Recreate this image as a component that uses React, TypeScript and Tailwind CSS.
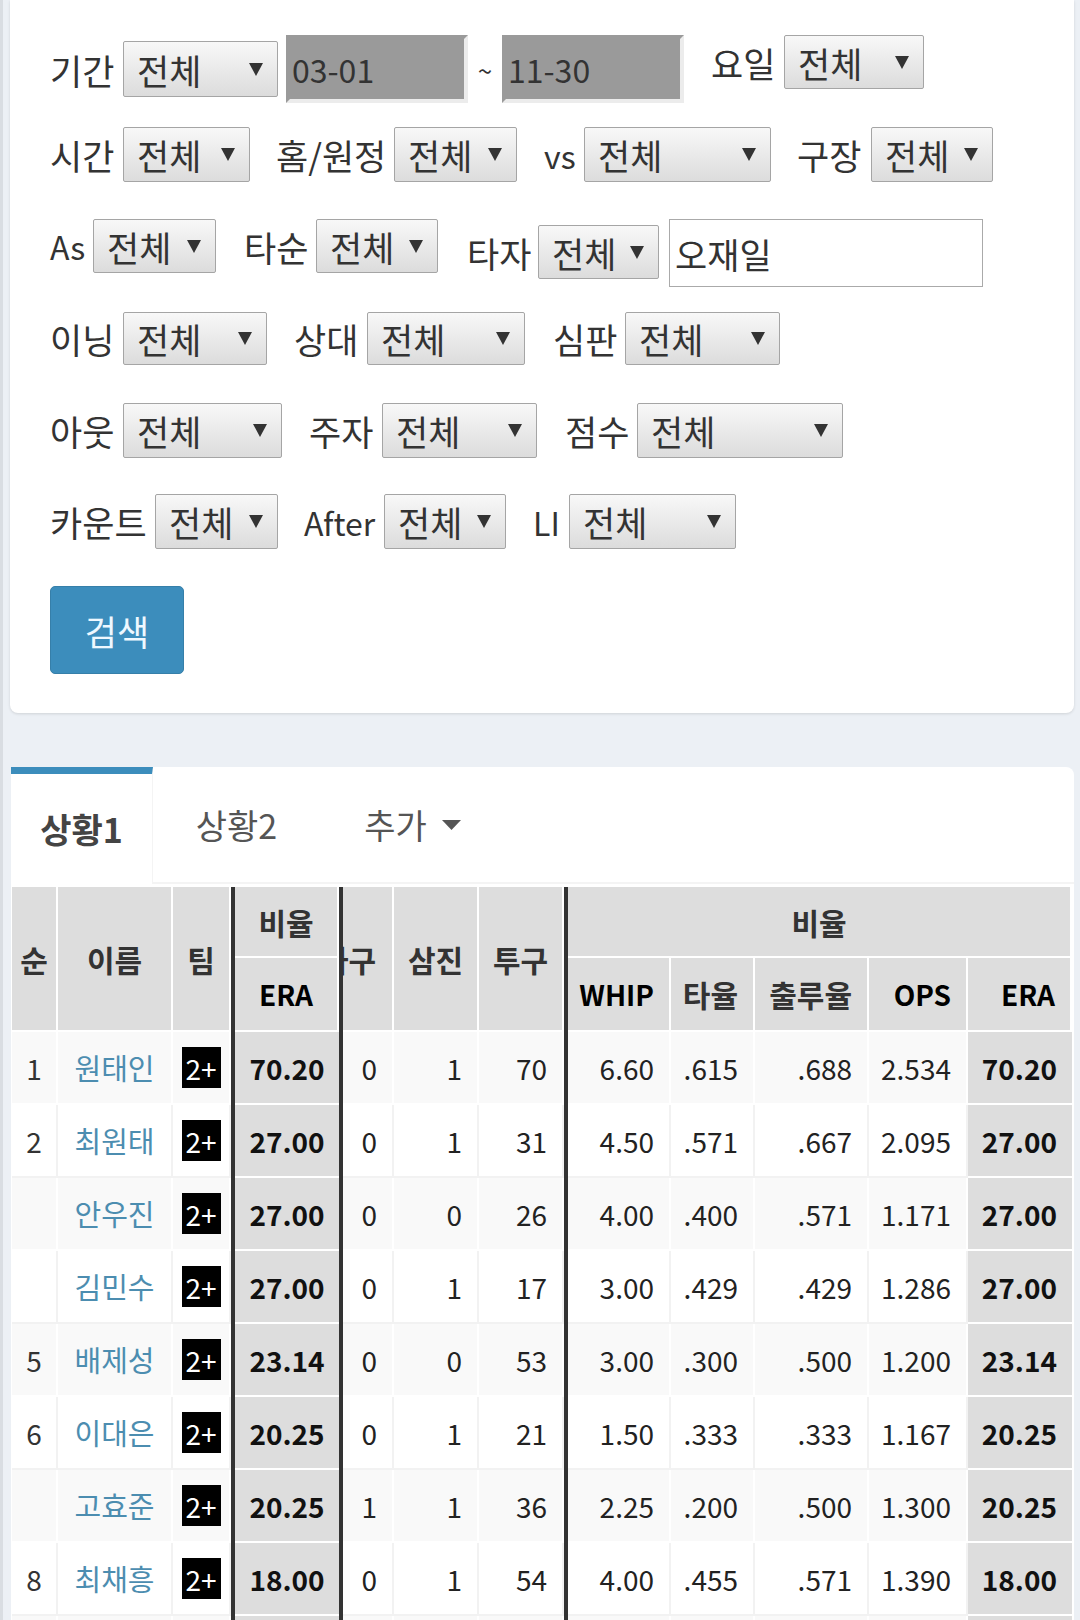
import React from 'react';

function Label({ text, cls }: { text: string; cls: string }) {
  return (
    <div className={`flex shrink-0 items-center leading-none text-[#333] ${cls}`}>{text}</div>
  );
}

function Select({ cls }: { cls: string }) {
  return (
    <div
      className={`flex shrink-0 items-center rounded-[2px] border border-[#a5a5a5] bg-linear-to-b from-[#f8f8f8] to-[#dcdcdc] pl-[13px] pr-[14px] text-[35px] leading-none text-[#333] ${cls}`}
    >
      <span>전체</span>
      <svg className="ml-auto" width="14" height="13" viewBox="0 0 14 13">
        <path d="M0 0H14L7 13Z" fill="#333" />
      </svg>
    </div>
  );
}

function DateBox({ text, cls }: { text: string; cls: string }) {
  return (
    <div
      className={`flex h-[68px] w-[182px] shrink-0 items-center border-4 border-t-[#9a9a9a] border-l-[#9a9a9a] border-r-[#ececec] border-b-[#ececec] bg-[#9a9a9a] pl-[2px] text-[32px] leading-none text-[#333] ${cls}`}
    >
      {text}
    </div>
  );
}

const rows = [
  ['1', '원태인', '70.20', '0', '1', '70', '6.60', '.615', '.688', '2.534'],
  ['2', '최원태', '27.00', '0', '1', '31', '4.50', '.571', '.667', '2.095'],
  ['', '안우진', '27.00', '0', '0', '26', '4.00', '.400', '.571', '1.171'],
  ['', '김민수', '27.00', '0', '1', '17', '3.00', '.429', '.429', '1.286'],
  ['5', '배제성', '23.14', '0', '0', '53', '3.00', '.300', '.500', '1.200'],
  ['6', '이대은', '20.25', '0', '1', '21', '1.50', '.333', '.333', '1.167'],
  ['', '고효준', '20.25', '1', '1', '36', '2.25', '.200', '.500', '1.300'],
  ['8', '최채흥', '18.00', '0', '1', '54', '4.00', '.455', '.571', '1.390'],
  ['9', '김태훈', '17.18', '0', '2', '66', '3.27', '.389', '.450', '1.006'],
];

// header cell base; korean headers a touch larger than latin ones
const H = 'flex items-center bg-[#dddddd] border-r-2 border-b-2 border-white font-bold leading-none';
const HK = `${H} text-[30px] text-[#333]`;
const HL = `${H} text-[28px] text-black`;

function StatsTable() {
  return (
    <div className="ml-px mt-[3px] grid grid-cols-[46px_115px_58px_4px_104px_4px_51px_85px_85px_4px_103px_84px_114px_99px_104px] grid-rows-[71px_74px_repeat(9,73px)]">
      <div className="col-start-4 row-span-full bg-[#333]" />
      <div className="col-start-6 row-span-full bg-[#333]" />
      <div className="col-start-10 row-span-full bg-[#333]" />

      <div className={`${HK} col-start-1 row-start-1 row-span-2 justify-center`}>순</div>
      <div className={`${HK} col-start-2 row-start-1 row-span-2 justify-center`}>이름</div>
      <div className={`${HK} col-start-3 row-start-1 row-span-2 justify-center border-r-0`}>팀</div>
      <div className={`${HK} col-start-5 row-start-1 justify-center border-r-0`}>비율</div>
      <div className={`${HL} col-start-5 row-start-2 justify-center border-r-0`}>ERA</div>
      <div className={`${HK} col-start-7 row-start-1 row-span-2 overflow-hidden`}>
        <span className="-ml-[22px] whitespace-nowrap">사구</span>
      </div>
      <div className={`${HK} col-start-8 row-start-1 row-span-2 justify-center`}>삼진</div>
      <div className={`${HK} col-start-9 row-start-1 row-span-2 justify-center border-r-0`}>투구</div>
      <div className={`${HK} col-start-11 col-span-5 row-start-1 justify-center border-r-0`}>비율</div>
      <div className={`${HL} col-start-11 row-start-2 justify-end pr-[15px]`}>WHIP</div>
      <div className={`${HK} col-start-12 row-start-2 justify-end pr-[15px]`}>타율</div>
      <div className={`${HK} col-start-13 row-start-2 justify-end pr-[15px]`}>출루율</div>
      <div className={`${HL} col-start-14 row-start-2 justify-end pr-[15px]`}>OPS</div>
      <div className={`${HL} col-start-15 row-start-2 justify-end border-r-0 pr-[15px]`}>ERA</div>

      {rows.map((r, i) => {
        const cell =
          i % 2 === 0
            ? 'flex items-center border-r-2 border-b-2 border-white bg-[#f9f9f9] leading-none'
            : 'flex items-center border-r-2 border-b-2 border-[#f2f2f2] bg-white leading-none';
        const num = `${cell} justify-end pr-[15px] text-[28px] text-[#222]`;
        const era = 'flex items-center border-b-2 border-white bg-[#dddddd] text-[28px] font-bold leading-none text-[#111]';
        return (
          <React.Fragment key={i}>
            <div className={`${cell} justify-center text-[28px] text-[#333]`}>{r[0]}</div>
            <div className={`${cell} justify-center text-[29px] text-[#4c8db0]`}>{r[1]}</div>
            <div className={`${cell} justify-center border-r-0`}>
              <span className="flex h-[41px] w-[39px] items-center justify-center bg-black text-[28px] leading-none text-white">2+</span>
            </div>
            <div className={`${era} justify-center`}>{r[2]}</div>
            <div className={num}>{r[3]}</div>
            <div className={num}>{r[4]}</div>
            <div className={`${num} border-r-0`}>{r[5]}</div>
            <div className={num}>{r[6]}</div>
            <div className={num}>{r[7]}</div>
            <div className={num}>{r[8]}</div>
            <div className={num}>{r[9]}</div>
            <div className={`${era} justify-end pr-[15px]`}>{r[2]}</div>
          </React.Fragment>
        );
      })}
    </div>
  );
}

export default function App() {
  return (
    <div className="h-[1620px] w-[1080px] overflow-hidden border-l-[3px] border-[#d9dde2] bg-[#ecf0f5] font-['Noto_Sans_CJK_KR','Noto_Sans',sans-serif]">
      {/* search form */}
      <div className="ml-[7px] w-[1064px] rounded-b-[8px] bg-white pb-[39px] pt-[35px] shadow-[0_1px_3px_rgba(0,0,0,0.12)]">
        <div className="flex h-[68px] items-start pl-[40px]">
          <Label text="기간" cls="mt-[6px] h-[56px] w-[73px] text-[35px]" />
          <Select cls="mt-[6px] h-[56px] w-[155px]" />
          <DateBox text="03-01" cls="ml-[8px]" />
          <div className="flex h-[68px] w-[34px] items-center justify-center text-[26px] text-[#333]">~</div>
          <DateBox text="11-30" cls="w-[181px]" />
          <Label text="요일" cls="ml-[27px] h-[54px] w-[73px] text-[35px]" />
          <Select cls="h-[54px] w-[140px]" />
        </div>

        <div className="mt-[24px] flex h-[55px] items-start pl-[40px]">
          <Label text="시간" cls="h-[55px] w-[73px] text-[35px]" />
          <Select cls="h-[55px] w-[127px]" />
          <Label text="홈/원정" cls="ml-[26px] h-[55px] w-[118px] text-[35px]" />
          <Select cls="h-[55px] w-[123px]" />
          <Label text="vs" cls="ml-[27px] h-[55px] w-[40px] text-[32px]" />
          <Select cls="h-[55px] w-[187px]" />
          <Label text="구장" cls="ml-[26px] h-[55px] w-[74px] text-[35px]" />
          <Select cls="h-[55px] w-[122px]" />
        </div>

        <div className="mt-[37px] flex h-[68px] items-start pl-[40px]">
          <Label text="As" cls="h-[54px] w-[43px] text-[32px]" />
          <Select cls="h-[54px] w-[123px]" />
          <Label text="타순" cls="ml-[28px] h-[54px] w-[72px] text-[35px]" />
          <Select cls="h-[54px] w-[122px]" />
          <Label text="타자" cls="ml-[29px] mt-[6px] h-[54px] w-[71px] text-[35px]" />
          <Select cls="mt-[6px] h-[54px] w-[121px]" />
          <div className="ml-[10px] flex h-[68px] w-[314px] items-center border border-[#aaaaaa] bg-white pl-[5px] text-[35px] leading-none text-[#333]">
            오재일
          </div>
        </div>

        <div className="mt-[25px] flex h-[53px] items-start pl-[40px]">
          <Label text="이닝" cls="h-[53px] w-[73px] text-[35px]" />
          <Select cls="h-[53px] w-[144px]" />
          <Label text="상대" cls="ml-[27px] h-[53px] w-[73px] text-[35px]" />
          <Select cls="h-[53px] w-[158px]" />
          <Label text="심판" cls="ml-[28px] h-[53px] w-[72px] text-[35px]" />
          <Select cls="h-[53px] w-[155px]" />
        </div>

        <div className="mt-[38px] flex h-[55px] items-start pl-[40px]">
          <Label text="아웃" cls="h-[55px] w-[73px] text-[35px]" />
          <Select cls="h-[55px] w-[159px]" />
          <Label text="주자" cls="ml-[27px] h-[55px] w-[73px] text-[35px]" />
          <Select cls="h-[55px] w-[155px]" />
          <Label text="점수" cls="ml-[28px] h-[55px] w-[72px] text-[35px]" />
          <Select cls="h-[55px] w-[206px]" />
        </div>

        <div className="mt-[36px] flex h-[55px] items-start pl-[40px]">
          <Label text="카운트" cls="h-[55px] w-[105px] text-[35px]" />
          <Select cls="h-[55px] w-[123px]" />
          <Label text="After" cls="ml-[26px] h-[55px] w-[80px] text-[32px]" />
          <Select cls="h-[55px] w-[122px]" />
          <Label text="LI" cls="ml-[27px] h-[55px] w-[36px] text-[32px]" />
          <Select cls="h-[55px] w-[167px]" />
        </div>

        <button className="ml-[40px] mt-[37px] flex h-[88px] w-[134px] items-center justify-center rounded-[5px] border border-[#367fa9] bg-[#3c8dbc] text-[35px] leading-none text-[#eef8ff]">
          검색
        </button>
      </div>

      {/* results */}
      <div className="ml-[8px] mt-[54px] w-[1063px] rounded-tr-[8px] bg-white">
        <div className="flex h-[117px] border-b-2 border-[#f4f4f4]">
          <div className="flex h-[117px] w-[142px] items-center justify-center border-r border-t-[7px] border-[#3c8dbc] border-r-[#f4f4f4] bg-white text-[34px] font-bold leading-none text-[#444]">
            상황1
          </div>
          <div className="flex w-[167px] items-center justify-center text-[34px] leading-none text-[#555]">상황2</div>
          <div className="flex w-[185px] items-center justify-center gap-[15px] text-[34px] leading-none text-[#555]">
            <span>추가</span>
            <svg width="19" height="10" viewBox="0 0 19 10">
              <path d="M0 0H19L9.5 10Z" fill="#555" />
            </svg>
          </div>
        </div>
        <StatsTable />
      </div>
    </div>
  );
}
